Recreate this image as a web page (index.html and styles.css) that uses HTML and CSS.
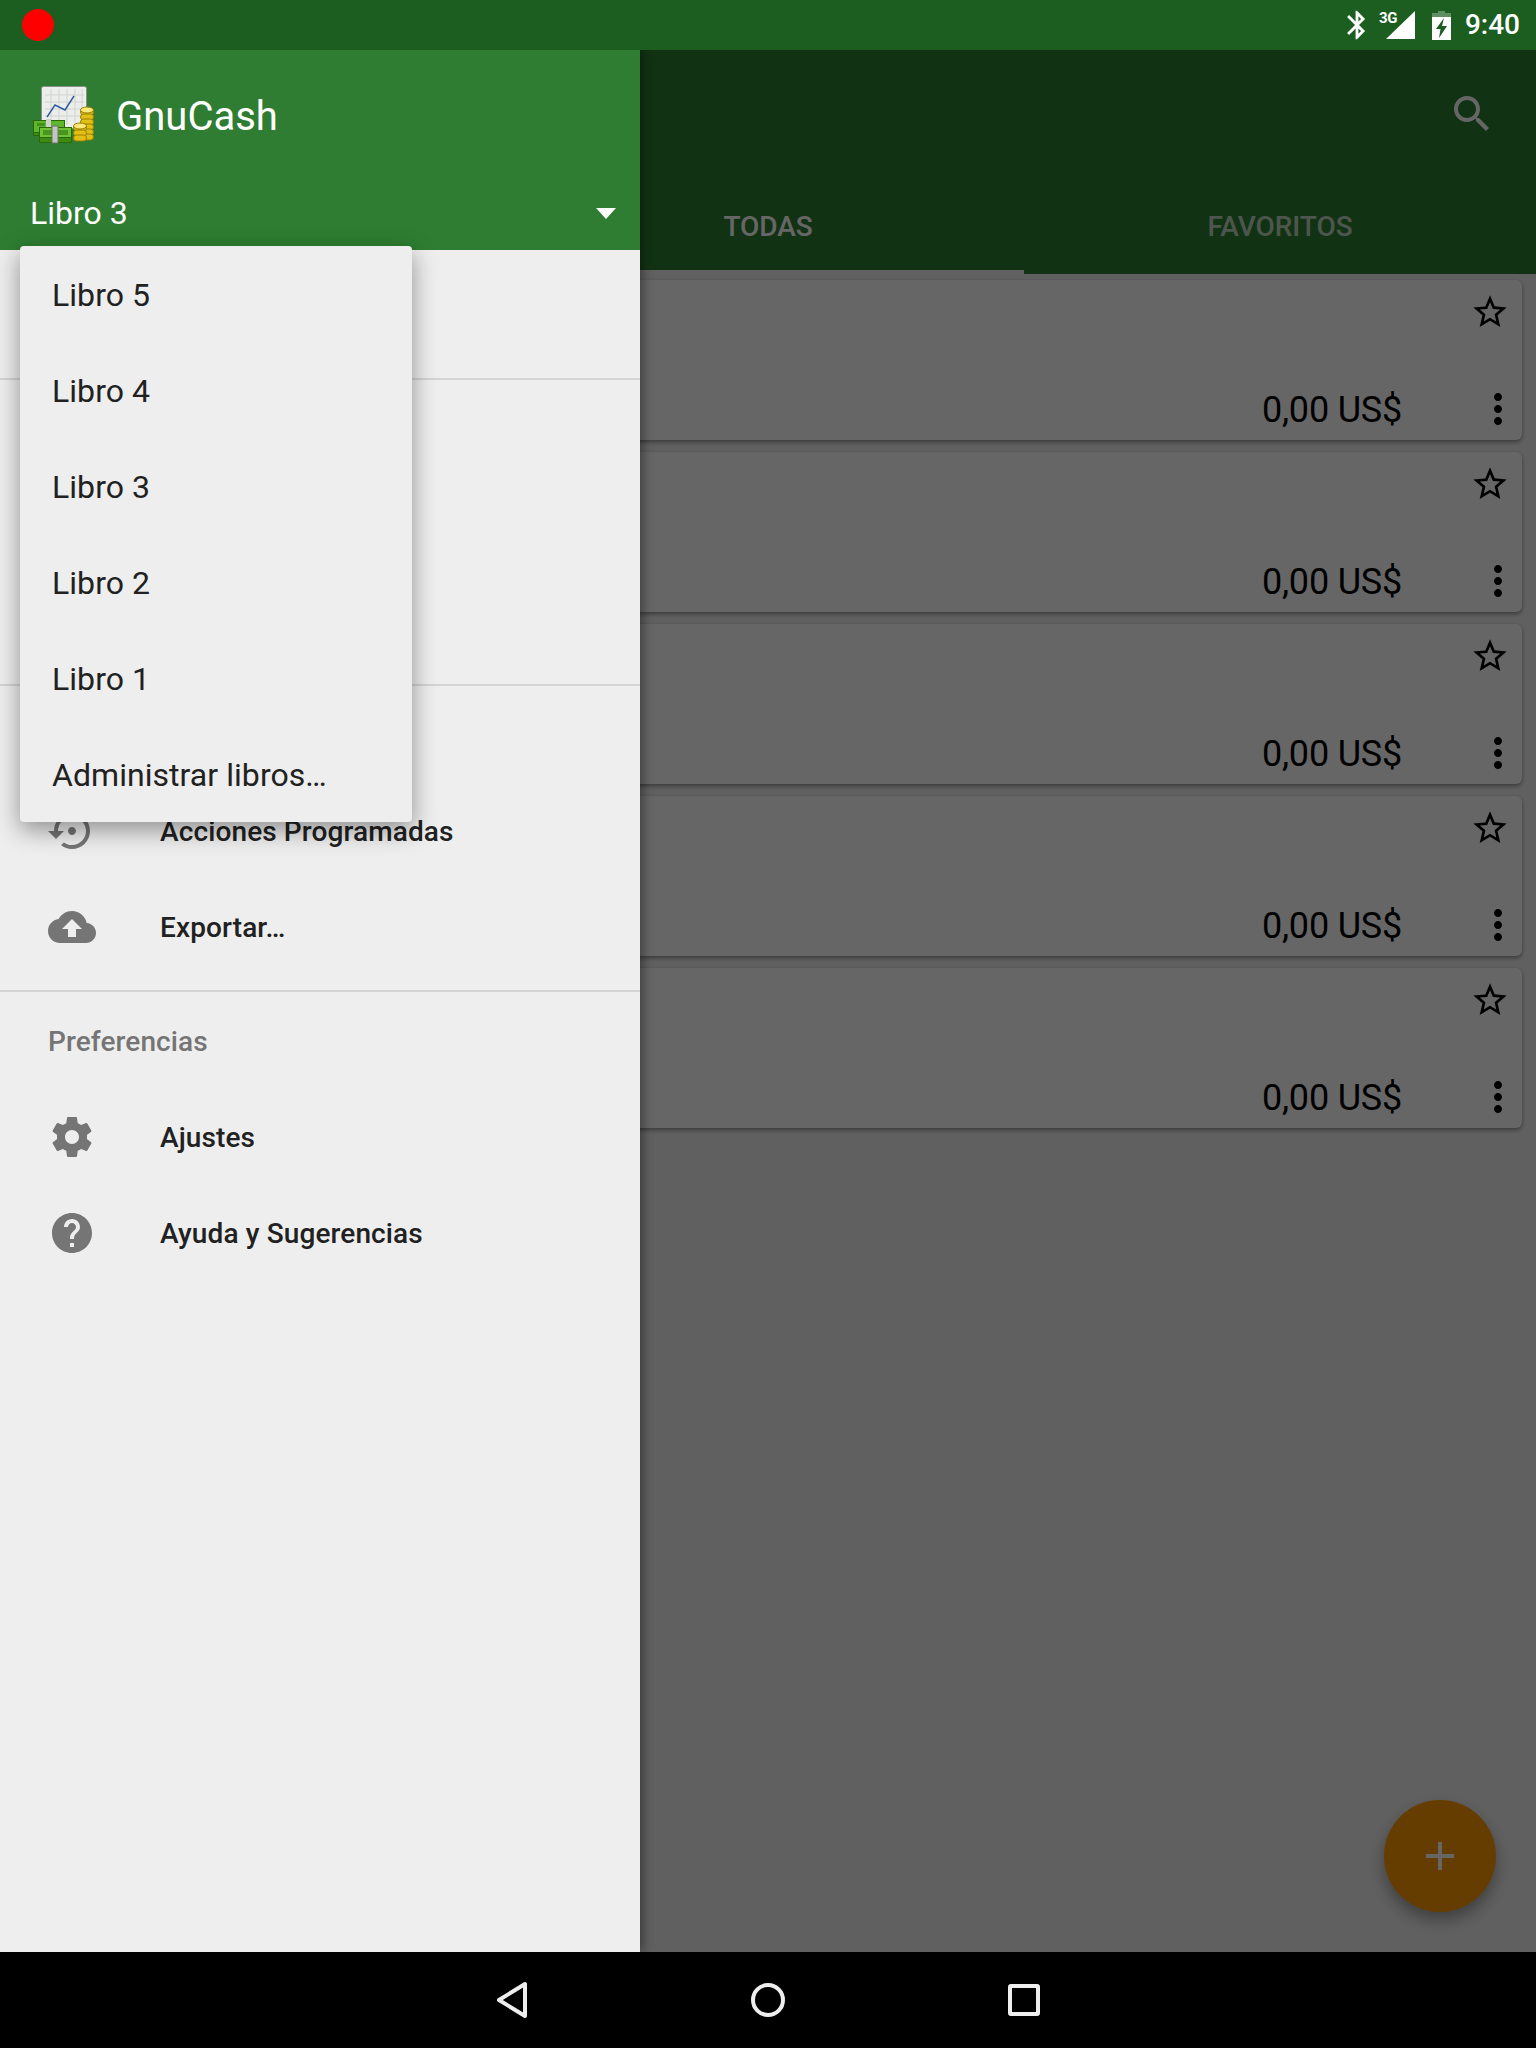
FILE: index.html
```html
<!DOCTYPE html>
<html lang="es">
<head>
  <meta charset="utf-8" />
  <title>GnuCash</title>
  <link rel="stylesheet" href="styles.css">
</head>
<body>
  <div class="status-bar">
    <span class="rec-dot"></span>
    <div class="status-icons">
      <svg class="ic-bt" viewBox="0 0 24 24"><path d="M17.71 7.71L12 2h-1v7.59L6.41 5 5 6.41 10.59 12 5 17.59 6.41 19 11 14.41V22h1l5.71-5.71-4.3-4.29 4.3-4.29zM13 5.83l1.88 1.88L13 9.59V5.83zm1.88 10.46L13 18.17v-3.76l1.88 1.88z"/></svg>
      <div class="signal">
        <span class="signal-label">3G</span>
        <svg class="ic-signal" viewBox="0 0 29 28"><path d="M29 0v28H0z"/></svg>
      </div>
      <svg class="ic-batt" viewBox="0 0 19 29">
        <path d="M6 0h7v2h6v4H0V2h6z" opacity=".3"/>
        <path d="M0 6h19v23H0z"/>
        <path class="bolt" d="M12 7L4 18h4.500l-1.500 9 8-12h-5z"/>
      </svg>
      <span class="clock">9:40</span>
    </div>
  </div>

  <div class="stage">
    <div class="main">
      <div class="toolbar">
        <svg class="ic-search" viewBox="0 0 24 24"><path d="M15.5 14h-.79l-.28-.27C15.41 12.59 16 11.11 16 9.5 16 5.91 13.09 3 9.5 3S3 5.91 3 9.5 5.91 16 9.5 16c1.61 0 3.09-.59 4.23-1.57l.27.28v.79l5 4.99L20.49 19l-4.99-5zm-6 0C7.01 14 5 11.99 5 9.5S7.01 5 9.5 5 14 7.01 14 9.5 11.99 14 9.5 14z"/></svg>
      </div>
      <div class="tabs">
        <div class="tab tab-active">TODAS</div>
        <div class="tab">FAVORITOS</div>
      </div>
      <div class="cards">
        <div class="card">
          <svg class="ic-star" viewBox="0 0 24 24"><path d="M22 9.24l-7.19-.62L12 2 9.19 8.63 2 9.24l5.46 4.73L5.82 21 12 17.27 18.18 21l-1.63-7.03L22 9.24zM12 15.4l-3.76 2.27 1-4.28-3.32-2.88 4.38-.38L12 6.1l1.71 4.04 4.38.38-3.32 2.88 1 4.28L12 15.4z"/></svg>
          <div class="card-foot">
            <span class="amount">0,00 US$</span>
            <svg class="ic-more" viewBox="0 0 24 24"><path d="M12 8c1.1 0 2-.9 2-2s-.9-2-2-2-2 .9-2 2 .9 2 2 2zm0 2c-1.1 0-2 .9-2 2s.9 2 2 2 2-.9 2-2-.9-2-2-2zm0 6c-1.1 0-2 .9-2 2s.9 2 2 2 2-.9 2-2-.9-2-2-2z"/></svg>
          </div>
        </div>
        <div class="card">
          <svg class="ic-star" viewBox="0 0 24 24"><path d="M22 9.24l-7.19-.62L12 2 9.19 8.63 2 9.24l5.46 4.73L5.82 21 12 17.27 18.18 21l-1.63-7.03L22 9.24zM12 15.4l-3.76 2.27 1-4.28-3.32-2.88 4.38-.38L12 6.1l1.71 4.04 4.38.38-3.32 2.88 1 4.28L12 15.4z"/></svg>
          <div class="card-foot">
            <span class="amount">0,00 US$</span>
            <svg class="ic-more" viewBox="0 0 24 24"><path d="M12 8c1.1 0 2-.9 2-2s-.9-2-2-2-2 .9-2 2 .9 2 2 2zm0 2c-1.1 0-2 .9-2 2s.9 2 2 2 2-.9 2-2-.9-2-2-2zm0 6c-1.1 0-2 .9-2 2s.9 2 2 2 2-.9 2-2-.9-2-2-2z"/></svg>
          </div>
        </div>
        <div class="card">
          <svg class="ic-star" viewBox="0 0 24 24"><path d="M22 9.24l-7.19-.62L12 2 9.19 8.63 2 9.24l5.46 4.73L5.82 21 12 17.27 18.18 21l-1.63-7.03L22 9.24zM12 15.4l-3.76 2.27 1-4.28-3.32-2.88 4.38-.38L12 6.1l1.71 4.04 4.38.38-3.32 2.88 1 4.28L12 15.4z"/></svg>
          <div class="card-foot">
            <span class="amount">0,00 US$</span>
            <svg class="ic-more" viewBox="0 0 24 24"><path d="M12 8c1.1 0 2-.9 2-2s-.9-2-2-2-2 .9-2 2 .9 2 2 2zm0 2c-1.1 0-2 .9-2 2s.9 2 2 2 2-.9 2-2-.9-2-2-2zm0 6c-1.1 0-2 .9-2 2s.9 2 2 2 2-.9 2-2-.9-2-2-2z"/></svg>
          </div>
        </div>
        <div class="card">
          <svg class="ic-star" viewBox="0 0 24 24"><path d="M22 9.24l-7.19-.62L12 2 9.19 8.63 2 9.24l5.46 4.73L5.82 21 12 17.27 18.18 21l-1.63-7.03L22 9.24zM12 15.4l-3.76 2.27 1-4.28-3.32-2.88 4.38-.38L12 6.1l1.71 4.04 4.38.38-3.32 2.88 1 4.28L12 15.4z"/></svg>
          <div class="card-foot">
            <span class="amount">0,00 US$</span>
            <svg class="ic-more" viewBox="0 0 24 24"><path d="M12 8c1.1 0 2-.9 2-2s-.9-2-2-2-2 .9-2 2 .9 2 2 2zm0 2c-1.1 0-2 .9-2 2s.9 2 2 2 2-.9 2-2-.9-2-2-2zm0 6c-1.1 0-2 .9-2 2s.9 2 2 2 2-.9 2-2-.9-2-2-2z"/></svg>
          </div>
        </div>
        <div class="card">
          <svg class="ic-star" viewBox="0 0 24 24"><path d="M22 9.24l-7.19-.62L12 2 9.19 8.63 2 9.24l5.46 4.73L5.82 21 12 17.27 18.18 21l-1.63-7.03L22 9.24zM12 15.4l-3.76 2.27 1-4.28-3.32-2.88 4.38-.38L12 6.1l1.71 4.04 4.38.38-3.32 2.88 1 4.28L12 15.4z"/></svg>
          <div class="card-foot">
            <span class="amount">0,00 US$</span>
            <svg class="ic-more" viewBox="0 0 24 24"><path d="M12 8c1.1 0 2-.9 2-2s-.9-2-2-2-2 .9-2 2 .9 2 2 2zm0 2c-1.1 0-2 .9-2 2s.9 2 2 2 2-.9 2-2-.9-2-2-2zm0 6c-1.1 0-2 .9-2 2s.9 2 2 2 2-.9 2-2-.9-2-2-2z"/></svg>
          </div>
        </div>
      </div>
    </div>

    <div class="fab">
      <svg class="ic-plus" viewBox="0 0 28 28"><path d="M12 0h4v12h12v4H16v12h-4V16H0v-4h12z"/></svg>
    </div>

    <div class="scrim"></div>

    <div class="drawer">
      <div class="drawer-head">
        <div class="brand">
          <svg class="logo" viewBox="0 0 64 60">
            <rect x="8.500" y="1.500" width="45" height="42" rx="2" fill="#eceeec" stroke="#8a8f8a"/>
            <path d="M12 10h39M12 17h39M12 24h39M12 31h39M18 4v36M26 4v36M34 4v36M42 4v36M49 4v36" stroke="#d0d3cf" fill="none"/>
            <path d="M14 32l8-12 10 5 9-14" stroke="#2f5a9e" stroke-width="1.400" fill="none"/>
            <g fill="#e2bf12" stroke="#9a7f06">
              <rect x="47.500" y="24" width="13" height="6" rx="3"/>
              <rect x="47.500" y="29" width="13" height="6" rx="3"/>
              <rect x="47.500" y="34" width="13" height="6" rx="3"/>
              <rect x="47.500" y="39" width="13" height="6" rx="3"/>
              <rect x="47.500" y="44" width="13" height="6" rx="3"/>
              <rect x="47.500" y="49" width="13" height="6" rx="3"/>
              <ellipse cx="54" cy="25" fill="#fbe878" rx="6.500" ry="3"/>
              <rect x="40.500" y="40" width="13" height="6" rx="3"/>
              <rect x="40.500" y="45" width="13" height="6" rx="3"/>
              <rect x="40.500" y="50" width="13" height="6" rx="3"/>
              <ellipse cx="47" cy="41" fill="#fbe878" rx="6.500" ry="3"/>
            </g>
            <g stroke="#2a6a05">
              <rect x="0.500" y="35.500" width="31" height="13" fill="#5fb52b"/>
              <rect x="0.500" y="47.500" width="31" height="3" fill="#3e8a12"/>
              <rect x="6.500" y="42.500" width="32" height="10" fill="#6fc136"/>
              <rect x="6.500" y="52.500" width="32" height="5" fill="#3e8a12"/>
            </g>
            <path d="M10 45h25v5H10zM4 38h8v3H4z" fill="#2f7a0c" opacity=".6"/>
            <rect x="13" y="34" width="5" height="8" fill="#cfd1cd"/>
            <rect x="19" y="41" width="6" height="17" fill="#c4c6c2" stroke="#6e706c"/>
          </svg>
          <span class="brand-name">GnuCash</span>
        </div>
        <div class="book-row">
          <span>Libro 3</span>
          <span class="caret"></span>
        </div>
      </div>

      <div class="drawer-sec sec-first"></div>
      <div class="drawer-sec sec-second"></div>
      <div class="drawer-sec sec-third">
        <div class="sec-label"></div>
        <div class="row">
          <svg class="row-icon" viewBox="0 0 24 24"><path d="M14 12c0-1.100-.9-2-2-2s-2 .9-2 2 .9 2 2 2 2-.9 2-2zm-2-9c-4.970 0-9 4.030-9 9H0l4 4 4-4H5c0-3.870 3.130-7 7-7s7 3.130 7 7-3.130 7-7 7c-1.510 0-2.910-.49-4.060-1.300l-1.420 1.440C8.040 20.300 9.940 21 12 21c4.970 0 9-4.030 9-9s-4.030-9-9-9z"/></svg>
          <span>Acciones Programadas</span>
        </div>
        <div class="row">
          <svg class="row-icon" viewBox="0 0 24 24"><path d="M19.35 10.04C18.67 6.59 15.64 4 12 4 9.11 4 6.6 5.64 5.35 8.04 2.34 8.36 0 10.91 0 14c0 3.31 2.69 6 6 6h13c2.76 0 5-2.24 5-5 0-2.64-2.05-4.78-4.65-4.96zM14 13v4h-4v-4H7l5-5 5 5h-3z"/></svg>
          <span>Exportar…</span>
        </div>
      </div>
      <div class="drawer-sec sec-last">
        <div class="sec-label">Preferencias</div>
        <div class="row">
          <svg class="row-icon" viewBox="0 0 24 24"><path d="M19.43 12.98c.04-.32.07-.64.07-.98s-.03-.66-.07-.98l2.11-1.65c.19-.15.24-.42.12-.64l-2-3.46c-.12-.22-.39-.3-.61-.22l-2.49 1c-.52-.4-1.08-.73-1.69-.98l-.38-2.65C14.46 2.18 14.25 2 14 2h-4c-.25 0-.46.18-.49.42l-.38 2.65c-.61.25-1.17.59-1.69.98l-2.49-1c-.23-.09-.49 0-.61.22l-2 3.46c-.13.22-.07.49.12.64l2.11 1.65c-.04.32-.07.65-.07.98s.03.66.07.98l-2.11 1.65c-.19.15-.24.42-.12.64l2 3.46c.12.22.39.3.61.22l2.49-1c.52.4 1.08.73 1.69.98l.38 2.65c.03.24.24.42.49.42h4c.25 0 .46-.18.49-.42l.38-2.65c.61-.25 1.17-.59 1.69-.98l2.49 1c.23.09.49 0 .61-.22l2-3.46c.12-.22.07-.49-.12-.64l-2.11-1.65zM12 15.5c-1.93 0-3.5-1.57-3.5-3.5s1.57-3.5 3.5-3.5 3.5 1.57 3.5 3.5-1.57 3.5-3.5 3.5z"/></svg>
          <span>Ajustes</span>
        </div>
        <div class="row">
          <svg class="row-icon" viewBox="0 0 24 24"><path d="M12 2C6.48 2 2 6.48 2 12s4.48 10 10 10 10-4.48 10-10S17.52 2 12 2zm1 17h-2v-2h2v2zm2.07-7.75l-.9.92C13.45 12.9 13 13.5 13 15h-2v-.5c0-1.1.45-2.1 1.17-2.83l1.24-1.26c.37-.36.59-.86.59-1.41 0-1.1-.9-2-2-2s-2 .9-2 2H8c0-2.21 1.79-4 4-4s4 1.79 4 4c0 .88-.36 1.68-.93 2.25z"/></svg>
          <span>Ayuda y Sugerencias</span>
        </div>
      </div>

      <ul class="book-menu">
        <li>Libro 5</li>
        <li>Libro 4</li>
        <li>Libro 3</li>
        <li>Libro 2</li>
        <li>Libro 1</li>
        <li>Administrar libros…</li>
      </ul>
    </div>
  </div>

  <div class="nav-bar">
    <svg class="nav-icon" viewBox="0 0 40 40"><path d="M33 4v32L7 20z"/></svg>
    <svg class="nav-icon" viewBox="0 0 40 40"><circle cx="20" cy="20" r="15"/></svg>
    <svg class="nav-icon" viewBox="0 0 40 40"><rect x="6" y="6" width="28" height="28" rx="1"/></svg>
  </div>
</body>
</html>
```

FILE: styles.css
```css
* {
  box-sizing: border-box;
}

body {
  margin: 0;
  width: 1536px;
  height: 2048px;
  display: flex;
  flex-direction: column;
  overflow: hidden;
  font-family: 'Roboto', sans-serif;
  background: #f0f0f0;
}

svg {
  display: block;
  flex: none;
}

/* status bar */
.status-bar {
  height: 50px;
  flex: none;
  display: flex;
  align-items: center;
  justify-content: space-between;
  padding: 0 16px 0 22px;
  background: #1b5e20;
}

.rec-dot {
  width: 32px;
  height: 32px;
  border-radius: 50%;
  background: #ff0000;
}

.status-icons {
  display: flex;
  align-items: center;
  color: white;
}

.status-icons svg {
  fill: white;
}

.ic-bt {
  width: 34px;
  height: 34px;
}

.signal {
  width: 36px;
  height: 28px;
  margin-left: 5px;
  display: flex;
  justify-content: flex-end;
  position: relative;
}

.ic-signal {
  width: 29px;
  height: 28px;
}

.signal-label {
  position: absolute;
  left: 0;
  top: 0;
  font-size: 15px;
  line-height: 14px;
  font-weight: 700;
  letter-spacing: -0.3px;
}

.ic-batt {
  width: 19px;
  height: 29px;
  margin-left: 17px;
}

.status-icons .bolt {
  fill: #1b5e20;
}

.clock {
  margin-left: 14px;
  font-size: 28px;
  font-weight: 500;
  line-height: 50px;
}

/* page under the drawer */
.stage {
  flex: 1;
  position: relative;
  overflow: hidden;
}

.main {
  height: 100%;
}

.toolbar {
  height: 128px;
  display: flex;
  align-items: center;
  justify-content: flex-end;
  padding-right: 40px;
  background: #2e7d32;
}

.ic-search {
  width: 48px;
  height: 48px;
  fill: white;
}

.tabs {
  height: 96px;
  display: flex;
  padding-left: 512px;
  background: #2e7d32;
}

.tab {
  width: 512px;
  padding-top: 5px;
  border-bottom: 4px solid transparent;
  display: flex;
  align-items: center;
  justify-content: center;
  font-size: 28px;
  font-weight: 500;
  letter-spacing: -0.05px;
  color: rgba(255,255,255,0.7);
}

.tab-active {
  color: white;
  border-bottom-color: #f5f5f5;
}

.cards {
  padding: 6px 14px 0;
  display: flex;
  flex-direction: column;
  gap: 12px;
}

.card {
  height: 160px;
  padding: 8px 0 0 0;
  display: flex;
  flex-direction: column;
  align-items: flex-end;
  background: white;
  border-radius: 6px;
  box-shadow: 0 2px 4px rgba(0,0,0,0.4);
}

.ic-star {
  width: 40px;
  height: 40px;
  margin-right: 12px;
  margin-top: 4px;
}

.card-foot {
  display: flex;
  align-items: center;
  margin-top: 53px;
  height: 48px;
}

.amount {
  font-size: 36px;
  letter-spacing: -0.2px;
  padding-top: 1px;
  color: #000;
}

.ic-more {
  width: 48px;
  height: 48px;
  margin-left: 72px;
}

.fab {
  position: absolute;
  right: 40px;
  bottom: 40px;
  width: 112px;
  height: 112px;
  border-radius: 50%;
  display: flex;
  align-items: center;
  justify-content: center;
  background: #ff9800;
  box-shadow: 0 8px 16px rgba(0,0,0,0.35);
}

.ic-plus {
  width: 28px;
  height: 28px;
  fill: white;
}

.scrim {
  position: absolute;
  inset: 0;
  background: rgba(0,0,0,0.6);
}

/* drawer */
.drawer {
  position: absolute;
  left: 0;
  top: 0;
  bottom: 0;
  width: 640px;
  background: #eeeeee;
  box-shadow: 3px 0 10px rgba(0,0,0,0.4);
}

.drawer-head {
  height: 200px;
  padding: 36px 24px 0 30px;
  background: #2e7d32;
  color: white;
}

.brand {
  display: flex;
  align-items: center;
  height: 60px;
}

.logo {
  width: 64px;
  height: 60px;
  margin-left: 3px;
  margin-top: -2px;
}

.brand-name {
  margin-left: 19px;
  font-size: 40px;
}

.book-row {
  margin-top: 37px;
  height: 60px;
  display: flex;
  align-items: center;
  justify-content: space-between;
  font-size: 32px;
}

.caret {
  width: 0;
  height: 0;
  border-left: 10px solid transparent;
  border-right: 10px solid transparent;
  border-top: 11px solid white;
}

.drawer-sec {
  border-bottom: 2px solid #d4d4d4;
  padding-bottom: 14px;
}

.sec-first {
  height: 130px;
}

.sec-second {
  height: 306px;
}

.sec-third {
  padding-bottom: 15px;
}

.sec-last {
  border-bottom: none;
}

.sec-label {
  height: 97px;
  padding: 2px 48px 0;
  display: flex;
  align-items: center;
  font-size: 28px;
  font-weight: 500;
  letter-spacing: 0.1px;
  color: #757575;
}

.row {
  height: 96px;
  padding-left: 48px;
  display: flex;
  align-items: center;
  font-size: 28px;
  font-weight: 500;
  letter-spacing: 0.12px;
  color: #212121;
}

.row-icon {
  width: 48px;
  height: 48px;
  margin-right: 64px;
  fill: #757575;
}

.book-menu {
  position: absolute;
  left: 20px;
  top: 196px;
  width: 392px;
  margin: 0;
  padding: 0;
  list-style: none;
  background: #eeeeee;
  border-radius: 4px;
  box-shadow: 0 8px 24px rgba(0,0,0,0.4);
}

.book-menu li {
  height: 96px;
  padding: 2px 0 0 32px;
  display: flex;
  align-items: center;
  font-size: 32px;
  letter-spacing: 0.05px;
  color: #212121;
}

/* nav bar */
.nav-bar {
  height: 96px;
  flex: none;
  display: flex;
  align-items: center;
  justify-content: center;
  gap: 216px;
  background: black;
}

.nav-icon {
  width: 40px;
  height: 40px;
  fill: none;
  stroke: #eeeeee;
  stroke-width: 4;
  stroke-linejoin: round;
}
```
